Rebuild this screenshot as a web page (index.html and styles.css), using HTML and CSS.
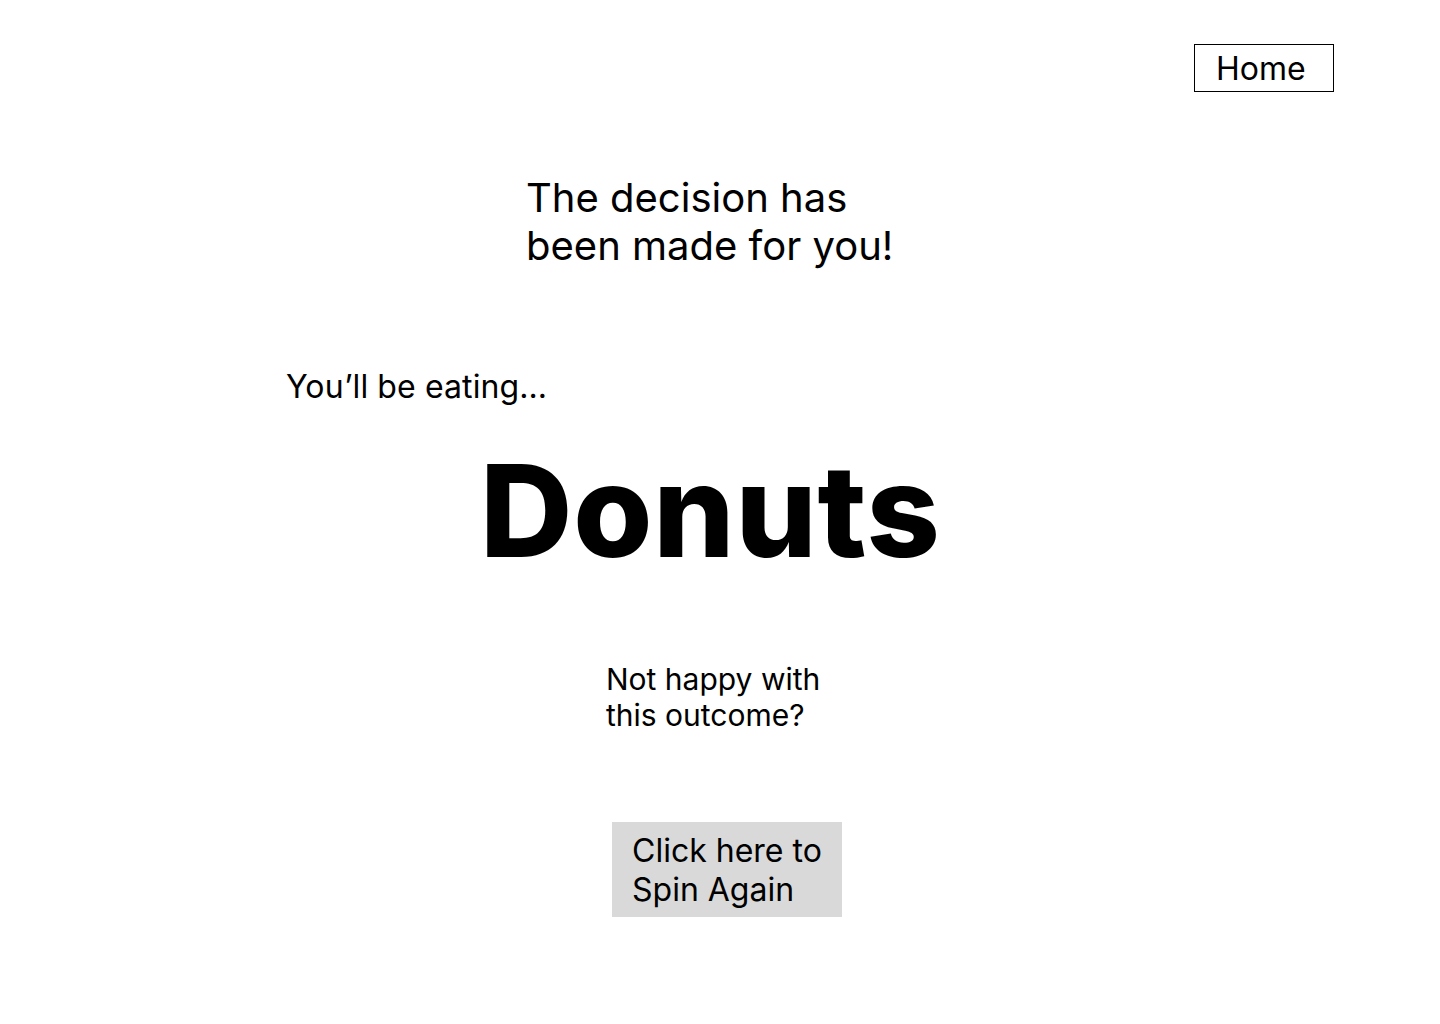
FILE: index.html
```html
<!DOCTYPE html>
<html lang="en">
<head>
<meta charset="utf-8">
<title>Decision</title>
<link rel="stylesheet" href="styles.css">
</head>
<body>
<div class="page">
  <header class="topbar">
    <a class="home-btn" href="#">Home</a>
  </header>
  <main class="content">
    <h1 class="headline">The decision has<br>been made for you!</h1>
    <p class="lead">You’ll be eating...</p>
    <h2 class="result">Donuts</h2>
    <p class="question">Not happy with<br>this outcome?</p>
    <button class="spin-btn" type="button">Click here to<br>Spin Again</button>
  </main>
</div>
</body>
</html>
```

FILE: styles.css
```css
* { box-sizing: border-box; }
html, body { margin: 0; padding: 0; background: #fff; }
body {
  font-family: Inter, "Noto Sans", sans-serif;
  color: #000;
  width: 1440px;
  height: 1024px;
  overflow: hidden;
}
.page { display: flex; flex-direction: column; }
.topbar {
  display: flex;
  justify-content: flex-end;
  padding: 44px 106px 0 0;
}
.home-btn {
  display: block;
  width: 140px;
  height: 48px;
  border: 1px solid #000;
  padding-left: 21px;
  font-size: 32px;
  line-height: 47px;
  color: #000;
  text-decoration: none;
}
.content { display: flex; flex-direction: column; align-items: flex-start; }
.headline {
  margin: 82px 0 0 526px;
  font-size: 40px;
  font-weight: 400;
  line-height: 48px;
}
.lead {
  margin: 98px 0 0 286px;
  font-size: 32px;
  line-height: 38px;
  letter-spacing: 0.1px;
}
.result {
  margin: 28px 0 0 480px;
  font-size: 128px;
  font-weight: 800;
  line-height: 154px;
  letter-spacing: 0.8px;
}
.question {
  margin: 73px 0 0 606px;
  font-size: 30px;
  line-height: 36px;
}
.spin-btn {
  margin: 89px 0 0 612px;
  width: 230px;
  height: 95px;
  padding: 9px 20px 8px;
  border: 0;
  background: #d9d9d9;
  font-family: inherit;
  font-size: 32px;
  line-height: 39px;
  text-align: left;
  color: #000;
}
```
